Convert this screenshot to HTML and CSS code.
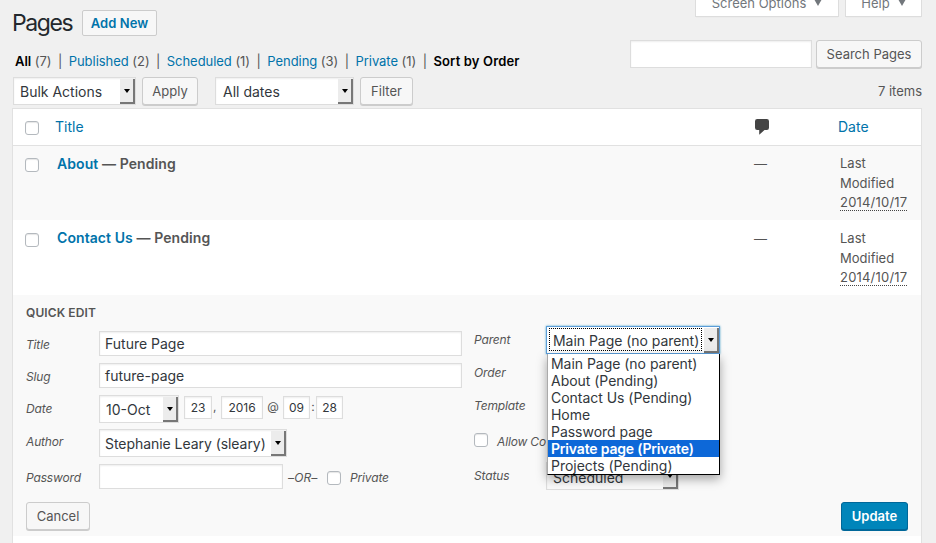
FILE: index.html
```
<!DOCTYPE html>
<html lang="en">
<head>
<meta charset="utf-8">
<title>Pages</title>
<link rel="stylesheet" href="styles.css">
</head>
<body>
<div class="wrap">
  <div class="top">
    <div class="top-left">
      <div class="heading"><h1>Pages</h1><a class="add-new">Add New</a></div>
      <ul class="views">
        <li><b>All</b> (7)</li><li class="sep">|</li>
        <li><a>Published</a> (2)</li><li class="sep">|</li>
        <li><a>Scheduled</a> (1)</li><li class="sep">|</li>
        <li><a>Pending</a> (3)</li><li class="sep">|</li>
        <li><a>Private</a> (1)</li><li class="sep">|</li>
        <li><b class="sort">Sort by Order</b></li>
      </ul>
      <div class="tablenav">
        <div class="select bulk"><span>Bulk Actions</span><i class="arrow"></i></div>
        <div class="button apply">Apply</div>
        <div class="select dates"><span>All dates</span><i class="arrow"></i></div>
        <div class="button filter">Filter</div>
      </div>
    </div>
    <div class="top-right">
      <div class="screen-tabs">
        <div class="tab options"><span>Screen Options</span><svg width="8" height="7"><path d="M0 0h8L4 7z"/></svg></div>
        <div class="tab help"><span>Help</span><svg width="8" height="7"><path d="M0 0h8L4 7z"/></svg></div>
      </div>
      <div class="search"><div class="input search-box"></div><div class="button search-button">Search Pages</div></div>
      <div class="count">7 items</div>
    </div>
  </div>

  <div class="table">
    <div class="row head">
      <i class="check"></i>
      <a class="title">Title</a>
      <span class="comments"><svg width="14" height="16" viewBox="0 0 14 16"><path d="M2.2 0h9.6Q14 0 14 2.2v6.6Q14 11 11.800 11H9.500L4.200 15.800V11h-2Q0 11 0 8.800V2.200Q0 0 2.200 0z"/></svg></span>
      <a class="date">Date</a>
    </div>
    <div class="row item first">
      <i class="check"></i>
      <div class="title"><a>About</a> — Pending</div>
      <span class="comments">—</span>
      <div class="date">Last<br>Modified<br><span class="stamp">2014/10/17</span></div>
    </div>
    <div class="row item second">
      <i class="check"></i>
      <div class="title"><a>Contact Us</a> — Pending</div>
      <span class="comments">—</span>
      <div class="date">Last<br>Modified<br><span class="stamp">2014/10/17</span></div>
    </div>
    <div class="quick-edit">
      <h4>QUICK EDIT</h4>
      <div class="columns">
        <div class="left">
          <div class="field f-title"><label>Title</label><div class="input wide">Future Page</div></div>
          <div class="field f-slug"><label>Slug</label><div class="input wide">future-page</div></div>
          <div class="field f-date"><label>Date</label>
            <div class="select month"><span>10-Oct</span><i class="arrow"></i></div>
            <div class="time"><div class="input small day">23</div><span class="comma">,</span><div class="input small year">2016</div><span class="at">@</span><div class="input small hour">09</div><span class="colon">:</span><div class="input small minute">28</div></div>
          </div>
          <div class="field f-author"><label>Author</label><div class="select author"><span>Stephanie Leary (sleary)</span><i class="arrow"></i></div></div>
          <div class="field f-password"><label>Password</label><div class="input password"></div><em class="or">–OR–</em><i class="check"></i><em class="private">Private</em></div>
        </div>
        <div class="right">
          <div class="field r-parent"><label>Parent</label>
            <div class="parent-box">
              <div class="select parent"><span>Main Page (no parent)</span><i class="arrow"></i></div>
              <div class="menu">
                <div>Main Page (no parent)</div>
                <div>About (Pending)</div>
                <div>Contact Us (Pending)</div>
                <div>Home</div>
                <div>Password page</div>
                <div class="active">Private page (Private)</div>
                <div>Projects (Pending)</div>
              </div>
            </div>
          </div>
          <div class="field r-order"><label>Order</label></div>
          <div class="field r-template"><label>Template</label></div>
          <div class="field r-allow"><i class="check"></i><em>Allow Co</em></div>
          <div class="field r-status"><label>Status</label><div class="select status"><span>Scheduled</span><i class="arrow"></i></div></div>
        </div>
      </div>
      <div class="actions"><div class="button cancel">Cancel</div><div class="button update">Update</div></div>
    </div>
  </div>
</div>
</body>
</html>
```
FILE: styles.css
```
* { box-sizing: border-box; }
body {
  margin: 0;
  height: 543px;
  overflow: hidden;
  background: #f0f0f0;
  color: #555;
  font: 13px/18px Inter, Roboto, sans-serif;
}
a { color: #0073aa; }
.wrap { padding: 0 14px 0 12px; }

.top { display: flex; justify-content: space-between; height: 108px; }
.heading { display: flex; align-items: flex-start; height: 52px; padding-top: 10px; }
h1 { margin: 0; width: 70px; font-size: 23px; font-weight: 400; line-height: 27px; color: #23282d; letter-spacing: -1.4px; }
.add-new {
  width: 75px; height: 26px; border: 1px solid #ccc; border-radius: 2px; background: #f7f7f7;
  font-weight: 600; line-height: 25px; text-align: center; white-space: nowrap; letter-spacing: 0.1px;
}
.views { display: flex; margin: 0; padding: 0 0 0 3px; height: 25px; list-style: none; white-space: nowrap; letter-spacing: -0.04px; }
.views b { color: #000; font-weight: 600; }
.views .sort { letter-spacing: 0.15px; }
.sep { width: 17.2px; text-align: center; }
.tablenav { display: flex; padding-left: 1px; }

.button {
  height: 28px; border: 1px solid #ccc; border-radius: 3px; background: #f7f7f7;
  box-shadow: 0 1px 0 #ccc; line-height: 26px; text-align: center; white-space: nowrap;
}
.select {
  display: flex; justify-content: space-between; height: 28px; padding: 1px 0 0 6px;
  border: 1px solid #ddd; background: #fff; color: #32373c;
  font-size: 14px; line-height: 26px; white-space: nowrap;
  box-shadow: inset 0 1px 2px rgba(0,0,0,.07);
}
.arrow {
  flex: none; width: 15px; height: 25px; background: #ececec;
  border-right: 2px solid #777; border-bottom: 2px solid #777;
  display: flex; align-items: center; justify-content: center;
}
.arrow::before { content: ""; border: 3.5px solid transparent; border-top: 4px solid #000; border-bottom: 0; }
.input { border: 1px solid #ddd; background: #fff; box-shadow: inset 0 1px 2px rgba(0,0,0,.07); color: #32373c; white-space: nowrap; }
.check { flex: none; width: 14px; height: 14px; border: 1px solid #b4b9be; border-radius: 3px; background: #fff; box-shadow: inset 0 1px 1px rgba(0,0,0,.1); }
.bulk { width: 123px; }
.apply { width: 56px; margin-left: 6px; }
.dates { width: 139px; margin-left: 17px; }
.dates span { padding-left: 1px; }
.filter { width: 53px; margin-left: 6px; }

.top-right { width: 292px; }
.screen-tabs { display: flex; justify-content: flex-end; height: 40px; gap: 6px; }
.tab {
  display: flex; justify-content: center; gap: 8px; height: 17px; border: 1px solid #ddd; border-top: 0;
  background: #fff; color: #72777c; line-height: 6px; white-space: nowrap; box-shadow: 0 1px 1px -1px rgba(0,0,0,.1);
}
.tab svg { fill: #72777c; margin-top: -1px; }
.options { width: 144px; }
.help { width: 77px; }
.search { display: flex; justify-content: space-between; height: 42px; }
.search-box { width: 182px; height: 28px; }
.search-button { width: 106px; }
.count { text-align: right; }

.table { height: 440px; border: 1px solid #e1e1e1; background: #fff; }
.row { display: grid; grid-template-columns: 31px 1fr 86px 82px; padding-left: 12px; align-items: start; }
.head { height: 37px; border-bottom: 1px solid #e1e1e1; font-size: 14px; align-items: center; }
.head .check { margin-top: 1px; }
.head .title, .head .date { margin-left: -1px; }
.head svg { display: block; fill: #444; margin-left: 2px; }
.item { height: 75px; padding-top: 9px; }
.first { height: 74px; background: #f9f9f9; }
.item .check { margin-top: 3px; }
.second .check { margin-top: 4px; }
.item .title { padding-left: 1px; font-size: 14px; font-weight: 600; letter-spacing: 0.08px; }
.item .comments { padding-left: 1px; }
.item .date { line-height: 19.500px; padding-left: 1px; margin-top: -1px; }
.second .date { margin-top: 0; }
.second .comments { padding-top: 1px; }
.stamp { display: inline-block; line-height: 15px; border-bottom: 1px dotted #444; letter-spacing: 0.2px; }

.quick-edit { height: 241px; padding: 9px 13px 0 13px; background: #f9f9f9; }
h4 { margin: 0; font-size: 12px; font-weight: 600; line-height: 18px; letter-spacing: 0.1px; }
.columns { display: flex; height: 180px; }
.left { width: 448px; padding-top: 9px; }
.right { flex: 1; padding-top: 4px; }
.field { display: flex; }
label, em { font-size: 12px; font-style: italic; line-height: 18px; white-space: nowrap; letter-spacing: -0.15px; }
label { width: 73px; flex: none; }
.left label { padding-top: 5px; }
.f-title, .f-slug { height: 32px; }
.wide { width: 363px; height: 25px; padding-left: 5px; font-size: 14px; line-height: 24px; }
.f-date { height: 34px; }
.month { width: 80px; }
.time { display: flex; margin: 1px 0 0 5px; font-size: 12px; line-height: 21px; }
.small { height: 23px; text-align: center; font-size: 12px; line-height: 21px; }
.day { width: 28px; }
.comma { width: 9px; padding-left: 1px; }
.year { width: 42px; }
.at { width: 20px; text-align: center; }
.hour, .minute { width: 27px; }
.colon { width: 6px; text-align: center; }
.f-author { height: 35px; }
.f-author label { padding-top: 4px; }
.author { width: 188px; padding-left: 5px; letter-spacing: -0.05px; }
.password { width: 184px; height: 25px; }
.or { margin: 5px 0 0 5px; width: 39px; letter-spacing: 0.15px; }
.f-password .check { margin-top: 7px; }
.private { margin: 5px 0 0 9px; }

.r-parent, .r-order { height: 33px; }
.right label { padding-top: 5px; width: 72px; }
.parent-box { position: relative; }
.parent { width: 174px; border-color: #5b9dd9; box-shadow: 0 0 2px rgba(30,140,190,.8); padding-left: 2px; }
.parent span { width: 153px; height: 23px; padding-left: 3px; border: 1px dotted #000; line-height: 24px; letter-spacing: -0.04px; }
.menu {
  position: absolute; z-index: 2; left: 1px; top: 28px; width: 173px; height: 121px;
  border: solid #000; border-width: 0 1px 1px 0; border-left: 1px solid #aaa; background: #fff; color: #32373c;
  font-size: 14px; line-height: 17px; white-space: nowrap; padding-top: 1px; box-shadow: 0 4px 10px rgba(0,0,0,.35);
  letter-spacing: -0.03px;
}
.menu div { height: 17px; padding-left: 3px; }
.menu .active { background: #0d68d8; color: #fff; font-weight: 600; letter-spacing: -0.18px; }
.r-template { height: 33px; }
.r-allow { height: 37px; }
.r-allow .check { margin: 8px 9px 0 0; }
.r-allow em { margin-top: 8px; }
.status { width: 133px; background: #fafafa; }
.status span { padding-top: 1px; }
.actions { display: flex; justify-content: space-between; }
.cancel { width: 64px; }
.update { width: 67px; border-color: #006799; background: #0085ba; box-shadow: 0 1px 0 #006799; color: #fff; font-weight: 600; }
```
